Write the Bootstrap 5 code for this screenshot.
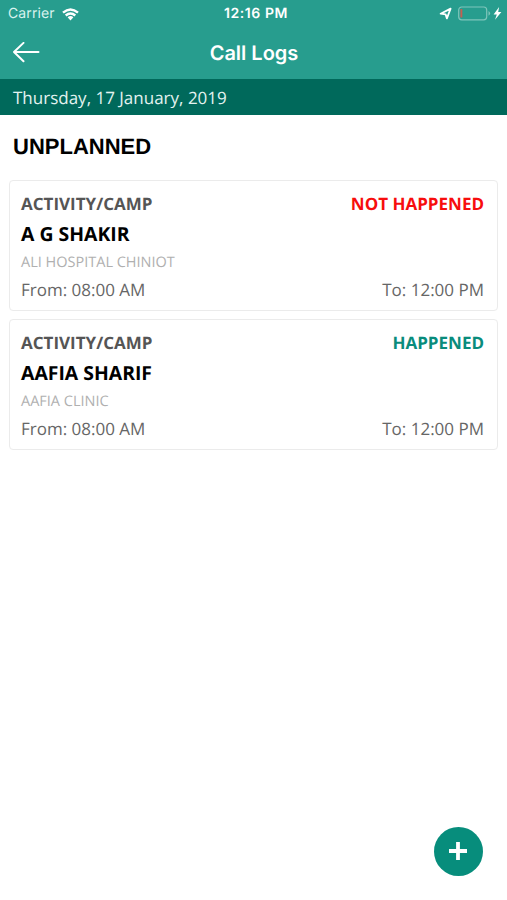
<!DOCTYPE html>
<html lang="en">
<head>
<meta charset="utf-8">
<meta name="viewport" content="width=device-width, initial-scale=1">
<title>Call Logs</title>
<link href="https://cdn.jsdelivr.net/npm/bootstrap@5.3.0/dist/css/bootstrap.min.css" rel="stylesheet">
<style>
  body { font-family: "Open Sans", "Noto Sans", sans-serif; color: #666; background: #fff; text-rendering: geometricPrecision; }
  .app-header { height: 79px; background: #279d8e; color: #fff; font-family: Inter, sans-serif; }
  .status-bar { height: 27px; font-size: 14px; line-height: 28px; padding: 0 5px 0 8px; }
  .status-bar .carrier { color: #d9f3ef; letter-spacing: .1px; }
  .status-bar .wifi { margin-left: 7px; }
  .status-bar .clock { font-weight: 600; font-size: 14px; letter-spacing: .6px; margin-left: 2px; }
  .title-bar { height: 52px; }
  .title-bar .back { width: 27px; margin-left: 13px; }
  .title-bar h1 { font-size: 20px; font-weight: 600; line-height: 52px; margin-left: 1px; }
  .date-bar { height: 36px; background: #00695b; color: #e3f3f0; font-size: 17px; line-height: 37px; padding-left: 13px; }
  .section-title { font: 700 22px/28px "Liberation Sans", sans-serif; color: #000; padding: 18px 13px 0; height: 65px; }
  .log-card { height: 131px; border: 1.5px solid #ebebeb; border-radius: 4px; padding: 9px 13px 0 11px; margin: 0 9px 8px; }
  .log-kind { font-size: 17px; font-weight: 700; line-height: 28px; color: #555; }
  .not-happened { color: #f70d0d; }
  .happened { color: #098c7c; }
  .log-name { font-size: 19.4px; font-weight: 700; line-height: 32px; color: #000; }
  .log-place { font-size: 14.5px; line-height: 26px; color: #b0b0b0; }
  .log-time { font-size: 17px; line-height: 27px; }
  .add-btn { width: 49px; height: 49px; right: 24.5px; bottom: 24.5px; background: #078d7c; }
</style>
<script src="https://cdn.jsdelivr.net/npm/bootstrap@5.3.0/dist/js/bootstrap.bundle.min.js"></script>
</head>
<body>
<header class="app-header">
  <div class="status-bar row g-0">
    <div class="col d-flex align-items-center">
      <span class="carrier">Carrier</span>
      <svg class="wifi" width="17" height="13" viewBox="0 0 17 13" fill="none" stroke="#fff" stroke-width="2.4"><path d="M1 4.7Q8.5-1.9 16 4.7M3.7 7.5Q8.5 3.4 13.3 7.5"/><path d="M5.6 9.2Q8.5 7 11.4 9.2L8.5 12.5Z" fill="#fff" stroke="none"/></svg>
    </div>
    <div class="col-auto"><span class="clock">12:16 PM</span></div>
    <div class="col d-flex align-items-center justify-content-end">
      <svg width="63" height="16" viewBox="0 0 63 16"><path d="M1.6 7.7 11.6 2.6 7.9 12.4 6.6 8.4Z" fill="none" stroke="#fff" stroke-width="1.8" stroke-linejoin="round"/><rect x="19.7" y="1" width="28" height="12.8" rx="3" fill="none" stroke="#7fc5bb" stroke-width="1.2"/><path d="M49.5 5Q53 7.4 49.5 9.8Z" fill="#7fc5bb"/><rect x="21.4" y="3" width="1.9" height="8.6" rx=".6" fill="#c55f52"/><path d="M60.1 1 54.6 8.4H57.8L56 13.8 62.4 5.9H59.2Z" fill="#fff"/></svg>
    </div>
  </div>
  <div class="title-bar row g-0">
    <div class="col d-flex align-items-center">
      <a class="back d-flex" href="#" aria-label="Back"><svg width="27" height="22" viewBox="0 0 27 22" fill="none" stroke="#fff" stroke-width="2" stroke-linecap="round" stroke-linejoin="round"><path d="M1 10H25.5M10.5 .9 1 10l9.5 9.2"/></svg></a>
    </div>
    <h1 class="col-auto mb-0">Call Logs</h1>
    <div class="col"></div>
  </div>
</header>
<div class="date-bar">Thursday, 17 January, 2019</div>
<main>
  <h2 class="section-title mb-0">UNPLANNED</h2>
  <article class="log-card">
    <div class="log-kind d-flex justify-content-between"><span>ACTIVITY/CAMP</span><span class="not-happened">NOT HAPPENED</span></div>
    <div class="log-name">A G SHAKIR</div>
    <div class="log-place">ALI HOSPITAL CHINIOT</div>
    <div class="log-time d-flex justify-content-between"><span>From: 08:00 AM</span><span>To: 12:00 PM</span></div>
  </article>
  <article class="log-card">
    <div class="log-kind d-flex justify-content-between"><span>ACTIVITY/CAMP</span><span class="happened">HAPPENED</span></div>
    <div class="log-name">AAFIA SHARIF</div>
    <div class="log-place">AAFIA CLINIC</div>
    <div class="log-time d-flex justify-content-between"><span>From: 08:00 AM</span><span>To: 12:00 PM</span></div>
  </article>
</main>
<button class="add-btn btn rounded-circle position-fixed p-0 border-0 d-flex align-items-center justify-content-center" type="button" aria-label="Add">
  <svg width="18" height="18" viewBox="0 0 18 18" stroke="#fff" stroke-width="3.8"><path d="M9 0V18M0 9H18"/></svg>
</button>
</body>
</html>
